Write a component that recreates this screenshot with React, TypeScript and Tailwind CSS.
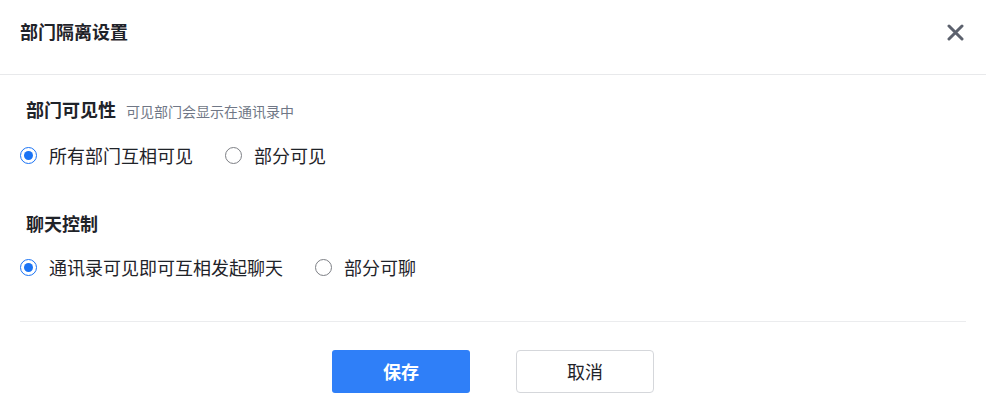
import { useState } from 'react';

const font = { fontFamily: '"Noto Sans CJK SC", "Noto Sans", sans-serif' };

function Radio({ checked, label, onClick }: { checked: boolean; label: string; onClick: () => void }) {
  return (
    <button type="button" onClick={onClick} className="flex items-center h-6">
      {checked ? (
        <span className="block shrink-0 w-[17px] h-[17px] rounded-full border-[1.5px] border-[#1a73f5] flex items-center justify-center">
          <span className="block w-[9px] h-[9px] rounded-full bg-[#1a73f5]"></span>
        </span>
      ) : (
        <span className="block shrink-0 w-[17px] h-[17px] rounded-full border-[1.5px] border-[#7d7f85]"></span>
      )}
      <span className="ml-[12px] text-[18px] leading-6 text-[#1f2329]">{label}</span>
    </button>
  );
}

export default function App() {
  const [visible, setVisible] = useState('all');
  const [chat, setChat] = useState('all');

  return (
    <div className="w-[986px] h-[409px] bg-white flex flex-col" style={font}>
      <div className="h-[75px] px-5 pt-[19px] flex justify-between items-start border-b border-[#e8e9eb]">
        <h1 className="text-[18px] leading-6 font-bold text-[#1f2329]">部门隔离设置</h1>
        <button type="button" className="mt-[5px] mr-[2px]">
          <svg width="17" height="17" viewBox="0 0 17 17">
            <path d="M2 2 L15 15 M15 2 L2 15" stroke="#5c616d" strokeWidth="3" strokeLinecap="round" />
          </svg>
        </button>
      </div>

      <div className="px-5 pt-[22px]">
        <div className="flex items-baseline pl-[6px]">
          <span className="text-[18px] leading-6 font-bold text-[#1f2329]">部门可见性</span>
          <span className="ml-[10px] text-[14px] text-[#707786]">可见部门会显示在通讯录中</span>
        </div>
        <div className="mt-[21px] flex items-center gap-[32px]">
          <Radio checked={visible === 'all'} label="所有部门互相可见" onClick={() => setVisible('all')} />
          <Radio checked={visible === 'part'} label="部分可见" onClick={() => setVisible('part')} />
        </div>

        <div className="mt-[44px] pl-[6px] text-[18px] leading-6 font-bold text-[#1f2329]">聊天控制</div>
        <div className="mt-[20px] flex items-center gap-[32px]">
          <Radio checked={chat === 'all'} label="通讯录可见即可互相发起聊天" onClick={() => setChat('all')} />
          <Radio checked={chat === 'part'} label="部分可聊" onClick={() => setChat('part')} />
        </div>

        <div className="mt-[42px] border-t border-[#ebecee]"></div>

        <div className="mt-[28px] flex justify-center gap-[46px]">
          <button type="button" className="w-[138px] h-[43px] rounded-[3px] bg-[#2f7ff8] text-white text-[18px] font-bold">
            保存
          </button>
          <button type="button" className="w-[138px] h-[43px] rounded-[4px] border border-[#d5d7db] bg-white text-[#1f2329] text-[18px]">
            取消
          </button>
        </div>
      </div>
    </div>
  );
}
